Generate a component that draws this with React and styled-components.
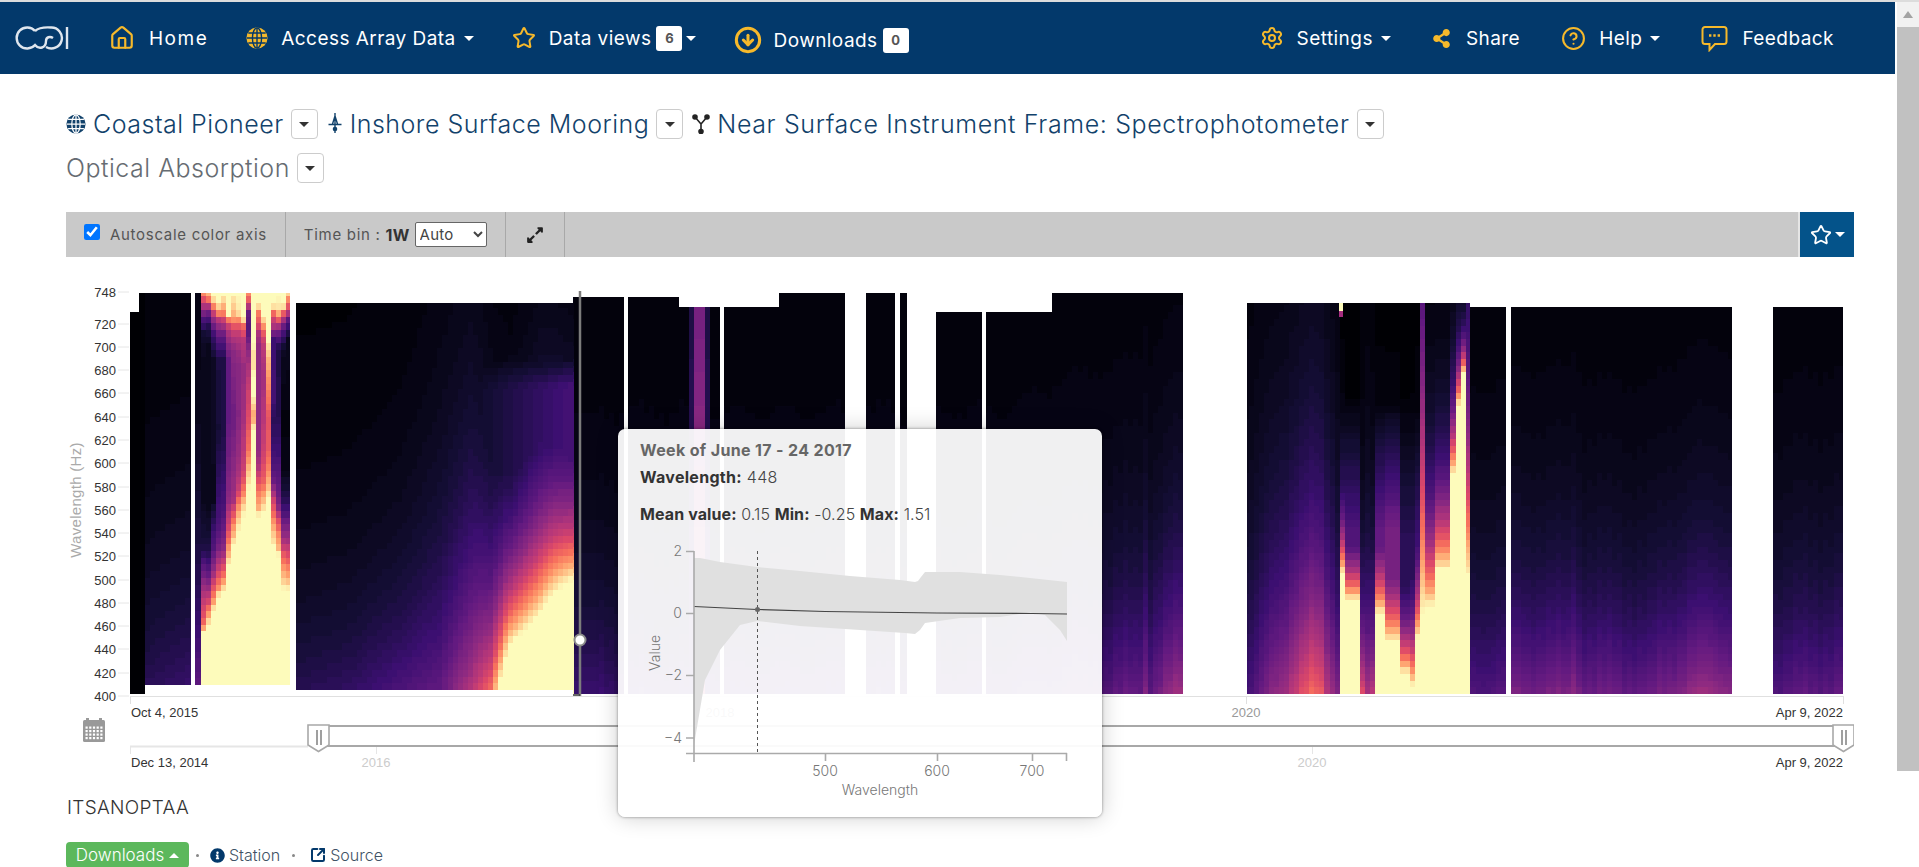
import React, { useMemo } from "react";
import styled, { createGlobalStyle } from "styled-components";
import {
  House,
  Star,
  CircleArrowDown,
  Settings,
  CircleHelp,
  SquareArrowOutUpRight,
} from "lucide-react";
import { FaShareAlt, FaInfoCircle, FaExpandAlt } from "react-icons/fa";

const GOLD = "#f6b92b";
const NAVY = "#03396b";

// ---- heatmap data, all in page pixels ----
const BOTTOM = 694;
const BANDS = [
  [130, 144.5, 312, 694],
  [139, 190.5, 293, 685],
  [194.7, 290, 293, 685],
  [295.7, 573, 303, 690],
  [573, 624, 297, 694],
  [628, 679, 297, 694],
  [679, 720, 307, 694],
  [724, 779, 307, 694],
  [779, 845, 293, 694],
  [866, 895, 293, 694],
  [900, 906.5, 293, 694],
  [936, 981.5, 312, 694],
  [986, 1052, 312, 694],
  [1052, 1183, 293, 694],
  [1247, 1470, 303, 694],
  [1470, 1505.5, 307, 694],
  [1511, 1732, 307, 694],
  [1773, 1843, 307, 694],
];

const BASE = [
  [130, 0, 0.3], [144, 0, 0.3], [145, 0.16, 0.35], [190, 0.2, 0.35],
  [195, 0.3, 0.4], [200, 0.3, 0.4],
  [296, 0.15, 0.3], [350, 0.18, 0.3], [400, 0.25, 0.32], [440, 0.3, 0.42],
  [470, 0.5, 0.42], [490, 0.7, 0.3], [498, 1.0, 0.25], [510, 1.78, 0.208],
  [540, 2.26, 0.245], [574, 4.15, 0.2], [575, 0.2, 0.33], [680, 0.2, 0.33],
  [1000, 0.2, 0.33], [1060, 0.25, 0.33], [1140, 0.3, 0.33], [1144, 0.42, 0.33],
  [1150, 0.3, 0.33], [1170, 0.4, 0.33], [1183, 0.45, 0.33],
  [1247, 0.22, 0.4], [1270, 0.36, 0.4], [1285, 0.45, 0.4], [1295, 0.58, 0.4],
  [1309, 0.66, 0.4], [1320, 0.64, 0.4], [1330, 0.45, 0.4], [1339, 0.38, 0.35],
  [1361, 0.6, 0.2], [1366, 0.45, 0.3], [1374, 0.5, 0.25], [1470, 0.25, 0.32],
  [1505, 0.27, 0.32], [1511, 0.35, 0.3], [1570, 0.35, 0.3], [1575, 0.45, 0.3],
  [1580, 0.33, 0.3], [1650, 0.3, 0.3], [1690, 0.42, 0.3], [1732, 0.42, 0.3],
  [1773, 0.26, 0.32], [1843, 0.3, 0.32],
];

// [x0, x1, height where it turns cream, falloff, floor value]
const RIDGES = [
  [689, 694, -3.2, 2, 0], [694, 704, -1.2, 2, 0], [704, 709, -3.2, 2, 0],
  [1339, 1344, 0.3, 0.12, 0.25], [1344, 1361, 0.235, 0.1, 0.25],
  [1375, 1385, 0.2, 0.14, 0.3], [1385, 1398, 0.13, 0.15, 0.35],
  [1398, 1408, 0.05, 0.12, 0.15], [1408, 1413, 0.02, 0.15, 0.15],
  [1413, 1420, 0.14, 0.15, 0.2], [1420, 1425, 0.2, 0.6, 0], [1425, 1434, 0.22, 0.2, 0.25],
  [1434, 1450, 0.31, 0.18, 0.35], [1450, 1455, 0.55, 0.14, 0.3],
  [1455, 1460, 0.72, 0.1, 0.3], [1460, 1466, 0.8, 0.07, 0.2], [1466, 1470, 0.29, 0.4, 0],
];

// the early deployment, one column of [y, value] stops per 5px from x=200
const EARLY = [
  [[293, 0.75], [305, 0.5], [318, 0.25], [335, 0.08], [360, 0.05], [500, 0.05], [548, 0.12], [563, 0.25], [597, 0.5], [620, 0.65], [630, 0.85], [632, 1], [685, 1]],
  [[293, 0.85], [300, 0.7], [310, 0.35], [325, 0.15], [345, 0.05], [500, 0.04], [548, 0.12], [575, 0.3], [600, 0.55], [612, 0.75], [620, 0.9], [625, 1], [685, 1]],
  [[293, 1], [302, 0.9], [310, 0.6], [320, 0.4], [335, 0.2], [360, 0.07], [500, 0.05], [530, 0.2], [548, 0.25], [570, 0.4], [590, 0.65], [605, 0.85], [610, 1], [685, 1]],
  [[293, 1], [300, 1], [310, 0.85], [320, 0.5], [335, 0.3], [360, 0.12], [430, 0.1], [500, 0.2], [530, 0.25], [548, 0.35], [570, 0.55], [590, 0.8], [597, 1], [685, 1]],
  [[293, 1], [302, 0.9], [312, 0.75], [322, 0.5], [335, 0.3], [360, 0.12], [430, 0.12], [500, 0.22], [530, 0.3], [550, 0.4], [575, 0.7], [590, 0.95], [595, 1], [685, 1]],
  [[293, 1], [315, 1], [322, 0.6], [335, 0.45], [360, 0.3], [418, 0.3], [470, 0.35], [500, 0.4], [530, 0.6], [555, 0.85], [565, 1], [685, 1]],
  [[293, 1], [305, 0.9], [318, 0.8], [330, 0.55], [350, 0.4], [418, 0.32], [470, 0.4], [500, 0.45], [520, 0.7], [535, 0.85], [545, 1], [685, 1]],
  [[293, 1], [312, 0.95], [322, 0.7], [335, 0.5], [360, 0.4], [418, 0.38], [470, 0.45], [490, 0.55], [510, 0.8], [525, 0.95], [530, 1], [685, 1]],
  [[293, 1], [318, 1], [325, 0.7], [340, 0.5], [370, 0.42], [418, 0.45], [470, 0.55], [490, 0.7], [505, 0.9], [515, 1], [685, 1]],
  [[293, 0.75], [303, 0.6], [312, 0.3], [330, 0.25], [350, 0.4], [390, 0.55], [418, 0.6], [450, 0.7], [475, 0.9], [490, 1], [685, 1]],
  [[293, 1], [345, 1], [350, 0.93], [365, 0.93], [375, 1], [395, 1], [405, 0.9], [418, 0.8], [430, 1], [685, 1]],
  [[293, 1], [305, 1], [310, 0.75], [325, 0.6], [335, 0.45], [350, 0.4], [450, 0.4], [470, 0.5], [490, 0.7], [510, 0.85], [515, 1], [685, 1]],
  [[293, 1], [315, 1], [325, 0.8], [335, 0.6], [350, 0.5], [380, 0.45], [418, 0.5], [450, 0.55], [480, 0.65], [500, 0.85], [512, 1], [685, 1]],
  [[293, 1], [340, 1], [345, 0.95], [360, 0.85], [385, 0.75], [400, 0.7], [418, 0.62], [450, 0.65], [470, 0.75], [490, 0.9], [498, 1], [685, 1]],
  [[293, 1], [305, 1], [315, 0.6], [325, 0.5], [340, 0.2], [400, 0.22], [418, 0.15], [450, 0.2], [480, 0.3], [500, 0.55], [515, 0.7], [530, 0.85], [548, 1], [685, 1]],
  [[293, 1], [308, 0.95], [318, 0.7], [330, 0.35], [350, 0.12], [418, 0.15], [450, 0.2], [480, 0.28], [505, 0.35], [520, 0.6], [535, 0.75], [548, 0.85], [555, 1], [685, 1]],
  [[293, 1], [305, 1], [315, 0.55], [330, 0.25], [350, 0.06], [418, 0.02], [470, 0.03], [500, 0.15], [520, 0.3], [540, 0.45], [555, 0.65], [570, 0.8], [585, 0.95], [590, 1], [685, 1]],
  [[293, 0.9], [300, 0.75], [310, 0.55], [320, 0.28], [340, 0.05], [418, 0.02], [470, 0.03], [500, 0.15], [520, 0.3], [540, 0.45], [555, 0.6], [570, 0.75], [585, 0.92], [590, 1], [685, 1]],
];

const MAGMA = [
  [0, 0, 4], [20, 14, 54], [59, 15, 112], [100, 26, 128], [140, 41, 129],
  [183, 55, 121], [222, 73, 104], [247, 112, 92], [254, 159, 109],
  [254, 207, 146], [253, 251, 187],
];

const magma = (v) => {
  const p = Math.max(0, Math.min(1, v)) * 10;
  const i = Math.min(9, Math.floor(p));
  const f = p - i;
  const c = MAGMA[i].map((a, k) => Math.round(a + (MAGMA[i + 1][k] - a) * f));
  return `rgb(${c[0]},${c[1]},${c[2]})`;
};

const baseAt = (x) => {
  for (let i = 1; i < BASE.length; i++) {
    if (x <= BASE[i][0]) {
      const [x0, b0, s0] = BASE[i - 1];
      const [x1, b1, s1] = BASE[i];
      const f = (x - x0) / (x1 - x0 || 1);
      return [b0 + (b1 - b0) * f, s0 + (s1 - s0) * f];
    }
  }
  return [0.2, 0.4];
};

const earlyAt = (x, y) => {
  const col = EARLY[Math.min(17, Math.max(0, Math.floor((x - 200) / 5)))];
  for (let i = 1; i < col.length; i++) {
    if (y <= col[i][0]) {
      const [y0, v0] = col[i - 1];
      const [y1, v1] = col[i];
      return v0 + ((v1 - v0) * (y - y0)) / (y1 - y0);
    }
  }
  return 1;
};

const valueAt = (x, t) => {
  if (x >= 200 && x < 290) return earlyAt(x, BOTTOM - t * 400);
  const ridge = RIDGES.find((r) => x >= r[0] && x < r[1]);
  let v;
  if (ridge) {
    v = Math.exp((ridge[2] - t) / ridge[3]);
    v = Math.max(v, ridge[4] * Math.max(0, Math.min(1, (0.75 - t) / 0.35)));
  } else {
    const [b, s] = baseAt(x);
    // weeks differ a little from one to the next
    const wobble = x > 600 ? 1 + 0.06 * Math.sin(x * 0.13) + 0.03 * Math.sin(x * 0.61) : 1;
    v = b * wobble * Math.exp(-t / s);
  }
  // faint bump around 670 on the long deployment
  if (x >= 430 && x < 574) {
    const amp = 0.22 * ((x - 430) / 140);
    v = Math.max(v, amp * Math.max(0, Math.min(1, (0.87 - t) / 0.1)));
  }
  return v;
};

const buildCells = () => {
  const cells = [];
  const colW = 5.04;
  const rowH = 6.7;
  BANDS.forEach(([x0, x1, top, bottom]) => {
    const start = 130 + Math.floor((x0 - 130) / colW) * colW;
    for (let cx = start; cx < x1; cx += colW) {
      const left = Math.max(cx, x0);
      const right = Math.min(cx + colW, x1);
      if (right <= left) continue;
      const mid = (left + right) / 2;
      let run = null;
      for (let y = bottom; y > top; y -= rowH) {
        const rowTop = Math.max(y - rowH, top);
        const t = (BOTTOM - (y - rowH / 2)) / 400;
        const fill = magma(Math.round(valueAt(mid, t) * 64) / 64);
        if (run && run.fill === fill) {
          run.y = rowTop;
          run.h += y - rowTop;
        } else {
          run = { x: left, y: rowTop, w: right - left + 0.4, h: y - rowTop, fill };
          cells.push(run);
        }
      }
    }
  });
  return cells;
};

const Y_TICKS = [
  [748, 292], [720, 324], [700, 347], [680, 370], [660, 393], [640, 417],
  [620, 440], [600, 463], [580, 487], [560, 510], [540, 533], [520, 556],
  [500, 580], [480, 603], [460, 626], [440, 649], [420, 673], [400, 696],
];

const GlobalStyle = createGlobalStyle`
  html, body {
    margin: 0;
    height: 100%;
    overflow: hidden;
    background: #fff;
    font-family: Inter, "Noto Sans", sans-serif;
  }
`;

const TopStrip = styled.div`
  height: 2px;
  background: #dcdcdc;
`;

const Shell = styled.div`
  display: flex;
  height: 865px;
  overflow: hidden;
`;

const Main = styled.main`
  flex: 1;
  min-width: 0;
`;

const Navbar = styled.nav`
  height: 72px;
  margin-right: 2px;
  padding: 0 61px 0 15px;
  box-sizing: border-box;
  background: ${NAVY};
  display: flex;
  align-items: center;
  justify-content: space-between;
`;

const NavGroup = styled.div`
  display: flex;
  align-items: center;
  gap: ${(p) => p.$gap || 42}px;
`;

const Logo = styled.svg`
  width: 54px;
  height: 26px;
  margin-right: 2px;
`;

const NavItem = styled.a`
  display: flex;
  align-items: center;
  gap: ${(p) => p.$gap || 13}px;
  color: #fff;
  font-size: 19px;
  letter-spacing: ${(p) => p.$ls || 0.45}px;
  white-space: nowrap;
  transform: translateY(${(p) => (p.$low ? 2 : 0)}px);

  svg {
    color: ${GOLD};
    flex: none;
  }
`;

const NavLabel = styled.span`
  display: flex;
  align-items: center;
`;

const Caret = styled.i`
  display: inline-block;
  margin-left: ${(p) => p.$gap ?? 8}px;
  border-top: 5px solid ${(p) => p.$color || "#fff"};
  border-left: 5px solid transparent;
  border-right: 5px solid transparent;
`;

const Badge = styled.b`
  display: flex;
  align-items: center;
  justify-content: center;
  width: 26px;
  height: 25px;
  margin-left: 5px;
  border-radius: 3px;
  background: #fff;
  color: #555;
  font-size: 13px;
  font-weight: 700;
  letter-spacing: 0;
`;

const Content = styled.div`
  padding: 28px 43px 0 66px;
`;

const Crumbs = styled.div`
  display: flex;
  flex-wrap: wrap;
  align-items: center;
  height: 44px;
`;

const Crumb = styled.span`
  display: flex;
  align-items: center;
  gap: 7px;
  margin-right: 7px;
  font-size: 25px;
  font-weight: 300;
  letter-spacing: ${(p) => p.$ls || 0.5}px;
  color: ${(p) => (p.$muted ? "#666c72" : "#12426b")};
  white-space: nowrap;
`;

const CrumbToggle = styled.button`
  display: flex;
  align-items: center;
  justify-content: center;
  width: 27px;
  height: 30px;
  margin-right: 9px;
  padding: 0;
  background: #fff;
  border: 1px solid #ccc;
  border-radius: 4px;
`;

const Toolbar = styled.div`
  display: flex;
  align-items: stretch;
  height: 45px;
  margin-top: 22px;
  background: #c9c9c9;
  color: #555;
  font-size: 15px;
  letter-spacing: 0.7px;
`;

const ToolCell = styled.label`
  display: flex;
  align-items: center;
  gap: ${(p) => p.$gap || 0}px;
  padding: ${(p) => p.$pad || "0 18px"};
  border-right: 1px solid #a8a8a8;
  white-space: nowrap;

  input {
    width: 16px;
    height: 16px;
    margin: 0;
    transform: translateY(-3px);
  }

  select {
    width: 72px;
    height: 25px;
    margin-left: 5px;
    background: #fff;
    border: 1px solid #666;
    border-radius: 2px;
    font: inherit;
    font-size: 15px;
    letter-spacing: 0.2px;
    color: #444;
  }

  b {
    color: #333;
    margin-left: 5px;
    font-size: 16px;
    letter-spacing: 0.3px;
  }
`;

const StarButton = styled.button`
  margin-left: auto;
  width: 56px;
  padding: 0;
  display: flex;
  align-items: center;
  justify-content: center;
  gap: 3px;
  background: #04538a;
  border: 0;
  border-left: 2px solid #e5e5e5;
  color: #fff;
`;

const ChartWrap = styled.div`
  position: relative;
  margin-top: 13px;
  width: 1788px;
  height: 505px;
`;

const ChartSvg = styled.svg`
  display: block;
  width: 1788px;
  height: 505px;
  font-family: "Liberation Sans", Arial, sans-serif;
  font-size: 13px;
`;

const Tooltip = styled.div`
  position: absolute;
  left: 552px;
  top: 159px;
  width: 484px;
  height: 388px;
  box-sizing: border-box;
  border-radius: 7px;
  background: rgba(255, 255, 255, 0.94);
  box-shadow: 0 0 3px rgba(0, 0, 0, 0.45), 0 0 22px rgba(0, 0, 0, 0.2);
  overflow: hidden;
`;

const TipHead = styled.div`
  height: 101px;
  box-sizing: border-box;
  padding: 11px 0 0 22px;
  font-size: 16px;
  color: #444;
`;

const TipLine = styled.p`
  margin: 0;
  line-height: 20px;
  height: ${(p) => p.$h || 27}px;
  font-weight: 300;
  letter-spacing: ${(p) => p.$ls || 0.1}px;
  white-space: nowrap;
  color: #444;

  b {
    font-weight: 700;
    color: ${(p) => (p.$title ? "#666" : "#333")};
  }
`;

const TipChart = styled.svg`
  display: block;
  width: 484px;
  height: 287px;
  font-family: Inter, sans-serif;
  font-size: 14px;
  font-weight: 300;
`;

const Sensor = styled.h4`
  margin: 21px 0 0 1px;
  height: 24px;
  line-height: 24px;
  font-size: 19px;
  font-weight: 300;
  letter-spacing: 0.3px;
  color: #333;
`;

const Actions = styled.div`
  display: flex;
  align-items: center;
  height: 26px;
  margin-top: 22px;
  font-size: 16px;
  font-weight: 300;
  color: #3f5265;
`;

const DownloadButton = styled.button`
  width: 123px;
  height: 26px;
  padding: 0;
  display: flex;
  align-items: center;
  justify-content: center;
  background: #5cb85c;
  border: 0;
  border-radius: 4px;
  color: #fff;
  font: inherit;
  font-size: 17px;
`;

const CaretUp = styled.i`
  margin-left: 5px;
  border-bottom: 5px solid #fff;
  border-left: 5px solid transparent;
  border-right: 5px solid transparent;
`;

const Dot = styled.span`
  width: 3px;
  height: 3px;
  margin: 0 ${(p) => p.$right || 11}px 0 ${(p) => p.$left || 7}px;
  border-radius: 50%;
  background: #888;
`;

const ActionLink = styled.a`
  display: flex;
  align-items: center;
  gap: 4px;

  svg {
    color: ${NAVY};
    flex: none;
  }
`;

const Scrollbar = styled.aside`
  width: 22px;
  flex: none;
  display: flex;
  flex-direction: column;
`;

const ScrollArrow = styled.div`
  height: 25px;
  display: flex;
  align-items: center;
  justify-content: center;
  background: #f1f1f1;

  &::before {
    content: "";
    border-bottom: 7px solid #a3a3a3;
    border-left: 5px solid transparent;
    border-right: 5px solid transparent;
  }
`;

const ScrollThumb = styled.div`
  height: 744px;
  background: #c1c1c1;
`;

const GlobeIcon = ({ size = 22, fill = GOLD, line = NAVY }) => (
  <svg width={size} height={size} viewBox="0 0 24 24">
    <circle cx="12" cy="12" r="11.5" fill={fill} />
    <g fill="none" stroke={line} strokeWidth="1.5">
      <ellipse cx="12" cy="12" rx="5" ry="11" />
      <path d="M12 1v22M1 12h22M2.5 6.5h19M2.5 17.5h19" />
    </g>
  </svg>
);

const BubbleIcon = () => (
  <svg width="27" height="27" viewBox="0 0 27 27" fill="none" stroke={GOLD} strokeWidth="2">
    <path d="M4 2h19a2.5 2.5 0 0 1 2.5 2.5v12A2.5 2.5 0 0 1 23 19h-9l-5.5 6v-6H4a2.5 2.5 0 0 1-2.5-2.5v-12A2.5 2.5 0 0 1 4 2z" />
    <path d="M8 10.5h2.4M12.3 10.5h2.4M16.6 10.5H19" strokeWidth="2.6" />
  </svg>
);

const MooringIcon = () => (
  <svg width="16" height="24" viewBox="0 0 16 24" fill="none" stroke="#12426b" strokeWidth="1.4">
    <path d="M8 1v20M1.5 12.5h13M8 4l-2.5 8M8 4l2.5 8" />
    <circle cx="8" cy="17" r="1.6" fill="#12426b" />
  </svg>
);

const ForkIcon = () => (
  <svg width="18" height="20" viewBox="0 0 18 20" fill="none" stroke="#222" strokeWidth="1.6">
    <path d="M9 18V10L3 3M9 10l6-7" />
    <circle cx="3" cy="3" r="2" fill="#222" />
    <circle cx="15" cy="3" r="2" fill="#222" />
    <circle cx="9" cy="17.5" r="2" fill="#222" />
  </svg>
);

const Heatmap = () => {
  const cells = useMemo(buildCells, []);
  return (
    <g shapeRendering="crispEdges">
      {cells.map((c, i) => (
        <rect key={i} x={c.x} y={c.y} width={c.w} height={c.h} fill={c.fill} />
      ))}
      <rect x="1339" y="303" width="4" height="8" fill="#fdfbbb" />
      <rect x="1339" y="311" width="4" height="6" fill="#a52c7e" />
    </g>
  );
};

const Handle = ({ x }) => (
  <g>
    <path
      d={`M${x} 725h21v20l-10.5 6.5L${x} 745z`}
      fill="#fff"
      stroke="#a8a8a8"
      strokeWidth="1.6"
    />
    <path d={`M${x + 9} 730v15M${x + 13} 730v15`} stroke="#777" strokeWidth="1.4" />
  </g>
);

const CalendarIcon = () => {
  const dots = [];
  for (let r = 0; r < 4; r++) {
    for (let c = 0; c < 5; c++) {
      dots.push(<rect key={`${r}-${c}`} x={85.5 + c * 3.7} y={726.5 + r * 3.5} width="2.2" height="2.2" fill="#fff" />);
    }
  }
  return (
    <g>
      <rect x="83" y="720" width="22" height="22" rx="1.5" fill="#999" />
      <rect x="86" y="718" width="3" height="4" fill="#999" />
      <rect x="99" y="718" width="3" height="4" fill="#999" />
      {dots}
    </g>
  );
};

const ChartArea = () => (
  <ChartSvg viewBox="66 270 1788 505">
    <CalendarIcon />
    <text transform="translate(81 500) rotate(-90)" textAnchor="middle" fill="#aaa" fontSize="15" letterSpacing="0.3">
      Wavelength (Hz)
    </text>
    {Y_TICKS.map(([label, y]) => (
      <g key={label}>
        <line x1="118" x2="129" y1={y} y2={y} stroke="#e6e6e6" />
        <text x="116" y={y + 5} textAnchor="end" fill="#333">{label}</text>
      </g>
    ))}
    <Heatmap />
    <line x1="130" x2="1843" y1="696.5" y2="696.5" stroke="#e0e0e0" />
    <path d="M130.5 696v8M1246.5 696v8M1843.5 696v8" stroke="#e0e0e0" />
    <text x="131" y="717" fill="#333">Oct 4, 2015</text>
    <text x="720" y="717" textAnchor="middle" fill="#999">2018</text>
    <text x="1246" y="717" textAnchor="middle" fill="#999">2020</text>
    <text x="1843" y="717" textAnchor="end" fill="#333">Apr 9, 2022</text>
    <line x1="130" x2="308" y1="746.5" y2="746.5" stroke="#e6e6e6" strokeWidth="2" />
    <path d="M130.5 747v7M376.5 747v7M1312.5 747v7" stroke="#e6e6e6" />
    <line x1="318" x2="1844" y1="726" y2="726" stroke="#a8a8a8" strokeWidth="2" />
    <line x1="318" x2="1844" y1="746" y2="746" stroke="#a8a8a8" strokeWidth="2" />
    <Handle x={308} />
    <Handle x={1833} />
    <text x="131" y="767" fill="#333">Dec 13, 2014</text>
    <text x="376" y="767" textAnchor="middle" fill="#ccc">2016</text>
    <text x="1312" y="767" textAnchor="middle" fill="#ccc">2020</text>
    <text x="1843" y="767" textAnchor="end" fill="#333">Apr 9, 2022</text>
    <line x1="580" x2="580" y1="291" y2="696" stroke="#7c7c7c" strokeWidth="2.5" />
    <line x1="573" x2="580" y1="695" y2="695" stroke="#333" strokeWidth="1.5" />
    <circle cx="580" cy="640" r="5.5" fill="#fff" stroke="#8a8a8a" strokeWidth="2" />
  </ChartSvg>
);

const SpreadChart = () => (
  <TipChart viewBox="618 530 484 287">
    <path
      d="M694 558L700 558L720 562L757 567L800 571L850 576L900 580L915 582L918 581L921 577L925 572L960 572L1000 575L1030 578L1067 582L1067 641L1060 630L1045 615L1030 612.5L1000 617L960 618L925 623L920 630L915 634L905 633L860 630L800 626L757 621L740 625L720 650L705 680L694 745Z"
      fill="#e0e0e0"
    />
    <path
      d="M694 606.5L757 609.5L825 611.5L937 613L1032 613.5L1067 614"
      fill="none"
      stroke="#444"
      strokeWidth="1.2"
    />
    <line x1="757.5" x2="757.5" y1="551" y2="753" stroke="#555" strokeDasharray="3 3" />
    <circle cx="757.5" cy="609.5" r="2.5" fill="#666" />
    <path
      d="M686 551.5h8M686 613.5h8M686 675.5h8M686 738h8M694 551v211M686 753.5h381M825.5 753v8M937.5 753v8M1032.5 753v8M1066.5 753v8"
      fill="none"
      stroke="#aaa"
      strokeWidth="1.6"
    />
    <g fill="#777" textAnchor="end">
      <text x="682" y="556">2</text>
      <text x="682" y="618">0</text>
      <text x="682" y="680">−2</text>
      <text x="682" y="743">−4</text>
    </g>
    <g fill="#777" textAnchor="middle">
      <text x="825" y="776">500</text>
      <text x="937" y="776">600</text>
      <text x="1032" y="776">700</text>
      <text x="880" y="795">Wavelength</text>
      <text transform="translate(660 653) rotate(-90)">Value</text>
    </g>
  </TipChart>
);

const App = () => (
  <>
    <GlobalStyle />
    <TopStrip />
    <Shell>
      <Main>
        <Navbar>
          <NavGroup $gap={38}>
            <Logo viewBox="0 0 54 26" fill="none" stroke="#dfe6ee" strokeWidth="2.4">
              <path d="M20 6A10.5 10.5 0 1 0 20 20C24 25 31 23 31 16C31 12 35 11 38 13" />
              <path d="M20 6C24 2.5 29 2 36 2.5A10.5 10.5 0 1 1 31 22" />
              <path d="M52 2v22" />
            </Logo>
            <NavItem $gap={14} $ls={1.5}>
              <House size={26} strokeWidth={2} />
              Home
            </NavItem>
            <NavItem>
              <GlobeIcon />
              <NavLabel>Access Array Data<Caret /></NavLabel>
            </NavItem>
            <NavItem>
              <Star size={24} strokeWidth={2} />
              <NavLabel>Data views<Badge>6</Badge><Caret $gap={4} /></NavLabel>
            </NavItem>
            <NavItem $low $gap={11}>
              <CircleArrowDown size={28} strokeWidth={2.6} />
              <NavLabel>Downloads<Badge>0</Badge></NavLabel>
            </NavItem>
          </NavGroup>
          <NavGroup $gap={41}>
            <NavItem>
              <Settings size={24} strokeWidth={2} />
              <NavLabel>Settings<Caret /></NavLabel>
            </NavItem>
            <NavItem $gap={15}>
              <FaShareAlt size={19} />
              Share
            </NavItem>
            <NavItem>
              <CircleHelp size={25} strokeWidth={2} />
              <NavLabel>Help<Caret /></NavLabel>
            </NavItem>
            <NavItem $gap={14}>
              <BubbleIcon />
              Feedback
            </NavItem>
          </NavGroup>
        </Navbar>
        <Content>
          <Crumbs>
            <Crumb><GlobeIcon size={20} fill="#12426b" line="#fff" />Coastal Pioneer</Crumb>
            <CrumbToggle><Caret $gap={0} $color="#333" /></CrumbToggle>
            <Crumb><MooringIcon />Inshore Surface Mooring</Crumb>
            <CrumbToggle><Caret $gap={0} $color="#333" /></CrumbToggle>
            <Crumb $ls={0.62}><ForkIcon />Near Surface Instrument Frame: Spectrophotometer</Crumb>
            <CrumbToggle><Caret $gap={0} $color="#333" /></CrumbToggle>
          </Crumbs>
          <Crumbs>
            <Crumb $muted>Optical Absorption</Crumb>
            <CrumbToggle><Caret $gap={0} $color="#333" /></CrumbToggle>
          </Crumbs>
          <Toolbar>
            <ToolCell $gap={10} $pad="0 18px">
              <input type="checkbox" defaultChecked />
              Autoscale color axis
            </ToolCell>
            <ToolCell>
              Time bin : <b>1W</b>
              <select defaultValue="Auto"><option>Auto</option></select>
            </ToolCell>
            <ToolCell $pad="0 20px"><FaExpandAlt size={18} color="#222" /></ToolCell>
            <StarButton>
              <Star size={22} strokeWidth={2} />
              <Caret $gap={0} />
            </StarButton>
          </Toolbar>
          <ChartWrap>
            <ChartArea />
            <Tooltip>
              <TipHead>
                <TipLine $title $ls={0.35}><b>Week of June 17 - 24 2017</b></TipLine>
                <TipLine $h={37} $ls={0.3}><b>Wavelength:</b> 448</TipLine>
                <TipLine><b>Mean value:</b> 0.15 <b>Min:</b> -0.25 <b>Max:</b> 1.51</TipLine>
              </TipHead>
              <SpreadChart />
            </Tooltip>
          </ChartWrap>
          <Sensor>ITSANOPTAA</Sensor>
          <Actions>
            <DownloadButton>Downloads<CaretUp /></DownloadButton>
            <Dot />
            <ActionLink><FaInfoCircle size={15} color={NAVY} />Station</ActionLink>
            <Dot $left={12} $right={15} />
            <ActionLink><SquareArrowOutUpRight size={16} strokeWidth={3} />Source</ActionLink>
          </Actions>
        </Content>
      </Main>
      <Scrollbar>
        <ScrollArrow />
        <ScrollThumb />
      </Scrollbar>
    </Shell>
  </>
);

export default App;
